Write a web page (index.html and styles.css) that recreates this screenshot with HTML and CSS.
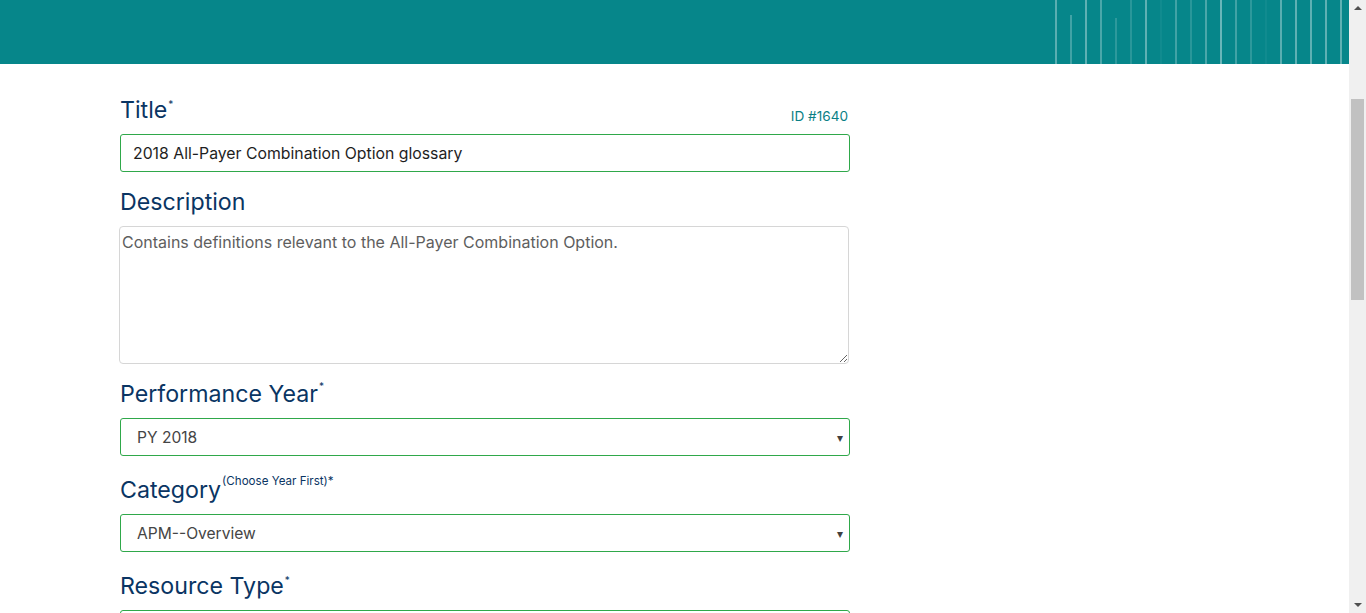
FILE: index.html
```html
<!DOCTYPE html>
<html lang="en">
<head>
<meta charset="utf-8">
<title>Edit Resource</title>
<link rel="stylesheet" href="styles.css">
</head>
<body>
<div class="page">
  <div class="main">
    <header class="banner">
      <svg class="banner-lines" width="300" height="64" viewBox="0 0 300 64" aria-hidden="true">
        <g stroke="#ffffff" stroke-width="1.6">
          <line x1="7" y1="0" x2="7" y2="64" stroke-opacity="0.42"/>
          <line x1="22" y1="15" x2="22" y2="64" stroke-opacity="0.3"/>
          <line x1="37" y1="0" x2="37" y2="64" stroke-opacity="0.45"/>
          <line x1="52" y1="0" x2="52" y2="64" stroke-opacity="0.35"/>
          <line x1="67" y1="18" x2="67" y2="64" stroke-opacity="0.2"/>
          <line x1="82" y1="0" x2="82" y2="64" stroke-opacity="0.18"/>
          <line x1="97" y1="0" x2="97" y2="64" stroke-opacity="0.45"/>
          <line x1="112" y1="0" x2="112" y2="64" stroke-opacity="0.06"/>
          <line x1="127" y1="0" x2="127" y2="64" stroke-opacity="0.3"/>
          <line x1="142" y1="0" x2="142" y2="64" stroke-opacity="0.18"/>
          <line x1="157" y1="0" x2="157" y2="64" stroke-opacity="0.35"/>
          <line x1="172" y1="0" x2="172" y2="64" stroke-opacity="0.5"/>
          <line x1="187" y1="0" x2="187" y2="64" stroke-opacity="0.3"/>
          <line x1="202" y1="0" x2="202" y2="64" stroke-opacity="0.2"/>
          <line x1="217" y1="0" x2="217" y2="64" stroke-opacity="0.06"/>
          <line x1="232" y1="0" x2="232" y2="64" stroke-opacity="0.42"/>
          <line x1="247" y1="0" x2="247" y2="64" stroke-opacity="0.45"/>
          <line x1="262" y1="0" x2="262" y2="64" stroke-opacity="0.45"/>
          <line x1="277" y1="0" x2="277" y2="64" stroke-opacity="0.45"/>
          <line x1="292" y1="0" x2="292" y2="64" stroke-opacity="0.45"/>
        </g>
      </svg>
    </header>

    <form class="form">
      <div class="field">
        <div class="label-row">
          <label class="label" for="title">Title<sup class="req req-title">*</sup></label>
          <span class="record-id">ID #1640</span>
        </div>
        <input class="input" id="title" type="text" value="2018 All-Payer Combination Option glossary">
      </div>

      <div class="field">
        <label class="label" for="desc">Description</label>
        <textarea class="textarea" id="desc">Contains definitions relevant to the All-Payer Combination Option.</textarea>
      </div>

      <div class="field field-select">
        <label class="label">Performance Year<sup class="req">*</sup></label>
        <div class="select"><span class="select-value">PY 2018</span><span class="caret">&#9662;</span></div>
      </div>

      <div class="field field-select">
        <label class="label">Category<sup class="hint">(Choose Year First)*</sup></label>
        <div class="select"><span class="select-value">APM--Overview</span><span class="caret">&#9662;</span></div>
      </div>

      <div class="field field-select">
        <label class="label">Resource Type<sup class="req req-title">*</sup></label>
        <div class="select"></div>
      </div>
    </form>
  </div>

  <div class="scrollbar" aria-hidden="true">
    <span class="sb-arrow sb-up"></span>
    <div class="sb-track"><div class="sb-thumb"></div></div>
    <span class="sb-arrow sb-down"></span>
  </div>
</div>
</body>
</html>
```

FILE: styles.css
```css
* { box-sizing: border-box; }

html, body {
  margin: 0;
  padding: 0;
  height: 100%;
  overflow: hidden;
  background: #ffffff;
  font-family: "Inter", "Noto Sans", "Liberation Sans", sans-serif;
}

.page {
  display: flex;
  height: 613px;
}

.main {
  flex: 1;
  overflow: hidden;
}

.banner {
  height: 64px;
  background: #06868a;
  display: flex;
  justify-content: flex-end;
}

.banner-lines {
  display: block;
}

.form {
  width: 730px;
  margin-left: 120px;
  padding-top: 32px;
}

.field {
  margin-bottom: 16px;
}

.field-select {
  margin-bottom: 20px;
}

.label-row {
  display: flex;
  justify-content: space-between;
  align-items: flex-end;
}

.label {
  display: block;
  font-size: 23.2px;
  line-height: 28px;
  font-weight: 400;
  color: #0a3563;
  margin-bottom: 10px;
}

.req {
  font-size: 10px;
  vertical-align: top;
  line-height: 10px;
  position: relative;
  top: 1px;
  margin-left: 1px;
}

.req-title {
  top: 3px;
}

.hint {
  font-size: 11.6px;
  vertical-align: top;
  line-height: 12px;
  position: relative;
  top: -1px;
  margin-left: 1px;
}

.record-id {
  font-size: 13.6px;
  color: #0b7f86;
  margin-bottom: 10px;
  margin-right: 2px;
  line-height: 16px;
}

.input {
  display: block;
  width: 100%;
  height: 38px;
  border: 1px solid #2fa84a;
  border-radius: 3px;
  padding: 0 12px;
  font-family: inherit;
  font-size: 15.8px;
  color: #1e1e1e;
  background: #ffffff;
  outline: none;
}

.textarea {
  display: block;
  width: 730px;
  height: 138px;
  border: 1px solid #d6d6d6;
  border-radius: 4px;
  padding: 3px 2px;
  margin-left: -1px;
  font-family: inherit;
  font-size: 16px;
  line-height: 24px;
  color: #5e5e5e;
  resize: vertical;
  outline: none;
}

.select {
  display: flex;
  align-items: center;
  justify-content: space-between;
  height: 38px;
  border: 1px solid #2fa84a;
  border-radius: 3px;
  padding: 0 6px 0 16px;
  font-size: 15.6px;
  color: #454545;
  background: #ffffff;
}

.caret {
  font-size: 12px;
  color: #404040;
}

.scrollbar {
  width: 17px;
  background: #f0f0f0;
  display: flex;
  flex-direction: column;
  align-items: center;
}

.sb-arrow {
  display: block;
  width: 0;
  height: 0;
  border-left: 4px solid transparent;
  border-right: 4px solid transparent;
}

.sb-up {
  margin-top: 6px;
  border-bottom: 4px solid #505050;
}

.sb-down {
  margin-bottom: 6px;
  border-top: 4px solid #505050;
}

.sb-track {
  flex: 1;
  width: 100%;
  padding-top: 89px;
  display: flex;
  justify-content: center;
}

.sb-thumb {
  width: 13px;
  height: 201px;
  background: #c1c1c1;
}
```
